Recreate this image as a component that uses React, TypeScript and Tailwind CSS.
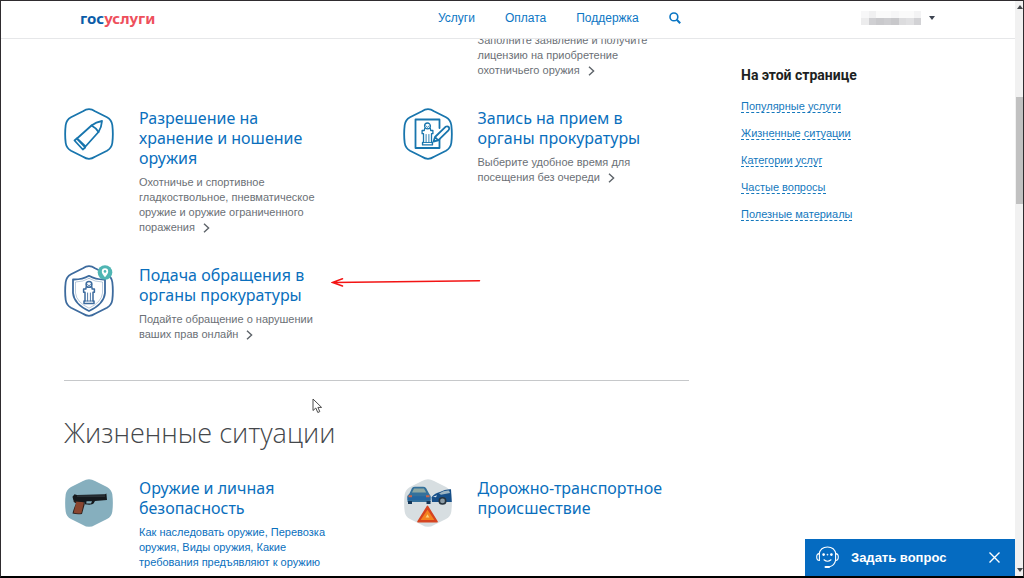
import type { ReactNode } from "react";

type Service = {
  title: string;
  text: string;
  icon: ReactNode;
};

const hexPath =
  "M19 3.2 Q25 -0.8 31 3.2 L43 9.3 Q47.6 12 48.3 17 Q49.4 26 48.3 35 Q47.6 40 43 42.7 L31 48.8 Q25 52.8 19 48.8 L7 42.7 Q2.4 40 1.7 35 Q0.6 26 1.7 17 Q2.4 12 7 9.3 Z";

function BulletIcon() {
  return (
    <svg width="50" height="52" viewBox="0 0 50 52" fill="none" stroke="#1875ad" strokeWidth="1.8" strokeLinejoin="round" strokeLinecap="round">
      <path d={hexPath} />
      <path d="M13 30.5 L27.5 17.5 Q32 14 38 13 Q37.5 19.5 34.5 24 L21.5 38.5 Z" />
      <path d="M27.5 17.5 Q31.5 19.5 34.5 24 M10.5 32.5 L18.8 41.5 M10.5 32.5 L12.8 30.5 L21.2 39.5 L18.8 41.5" />
    </svg>
  );
}

function Pillar() {
  return (
    <>
      <circle cx="0" cy="-8.6" r="2.9" />
      <path d="M-1.6 -8.8 L0 -7 L1.6 -8.8" strokeWidth="0.8" />
      <path d="M-2.8 -6.2 L-3.2 -4 H-5.4 V-0.8 H-4 V8 H-5 V10.4 H5 V8 H4 V-0.8 H5.4 V-4 H3.2 L2.8 -6.2" />
      <path d="M-1.4 0 V8 M1.4 0 V8 M-4 8 H4" strokeWidth="0.9" />
    </>
  );
}

function AppointmentIcon() {
  return (
    <svg width="50" height="52" viewBox="0 0 50 52" fill="none" stroke="#1875ad" strokeWidth="1.8" strokeLinejoin="round" strokeLinecap="round">
      <path d={hexPath} />
      <path d="M36.5 31 V40 H12.5 V11.5 H36.5 V20" />
      <g transform="translate(24.5 26.5)" strokeWidth="1.3">
        <Pillar />
      </g>
      <path d="M30.5 33.5 L32 29 L42.5 18.8 Q44.5 17.6 46 19.4 Q46.8 20.8 45.4 22.3 L35.2 32.4 Z M32 29 L35.2 32.4" fill="#fff" />
    </svg>
  );
}

function AppealIcon() {
  return (
    <svg width="50" height="52" viewBox="0 0 50 52" fill="none" stroke="#3d6b9e" strokeWidth="1.8" strokeLinejoin="round" strokeLinecap="round">
      <path d={hexPath} />
      <path d="M25 10.8 Q18 14.8 9 14.5 V28 Q10 39 25 46 Q40 39 41 28 V14.5 Q32 14.8 25 10.8 Z" />
      <path d="M25 13.4 Q19 17 11.5 17 V28 Q12.5 37.2 25 43.2 Q37.5 37.2 38.5 28 V17 Q31 17 25 13.4 Z" strokeWidth="0.6" strokeOpacity="0.6" />
      <g transform="translate(25 28)" strokeWidth="1.5">
        <Pillar />
      </g>
      <circle cx="41" cy="7.5" r="7.3" fill="#4fb5b3" stroke="none" />
      <path d="M41 12.2 Q37.8 8.5 37.8 6.4 A3.2 3.2 0 0 1 44.2 6.4 Q44.2 8.5 41 12.2 Z" fill="#fff" stroke="none" />
      <circle cx="41" cy="6.4" r="1.3" fill="#4fb5b3" stroke="none" />
    </svg>
  );
}

function GunIcon() {
  return (
    <svg width="50" height="50" viewBox="0 0 50 52" preserveAspectRatio="none">
      <path d={hexPath} fill="#86afbe" />
      <path d="M11 21 L21 22 L20.5 28 L18 37.4 Q13 38 8.5 37 Q9.5 32 12 26.5 L9.5 24.6 Z" fill="#2a211f" />
      <path d="M12.4 24.4 L20 25 L17.4 36.6 Q13 37.2 9.6 36.2 Z" fill="#8a4630" />
      <path d="M8.5 19.5 L10.5 16.8 L13 17.8 L41 17 L42.4 16.2 L43 23 L31 23.8 L29.5 26.6 Q28.5 28.4 20.5 27.4 L21 25.4 L9.5 23.6 Z" fill="#15191d" />
      <path d="M22.5 24.2 H28 L27 26.4 H22.3 Z" fill="#86afbe" />
      <path d="M13 18.8 H41" stroke="#3a4349" strokeWidth="1" />
    </svg>
  );
}

function AccidentIcon() {
  return (
    <svg width="50" height="50" viewBox="0 0 50 52" preserveAspectRatio="none">
      <path d={hexPath} fill="#d7dee1" />
      <path d="M6.5 16 L9 10.5 Q10 9 12 9 H20 Q22 9 23 10.5 L26 16 L27.5 18.5 V25 H4.5 V18.5 Z" fill="#34719c" />
      <path d="M9 15 L11 10.8 H21 L23.2 15 Z" fill="#8fa9a4" />
      <path d="M4.5 19 H27.5 V23 H4.5 Z" fill="#2466a0" />
      <path d="M5.5 18 H9 V20 H5.5 Z M23 18 H26.5 V20 H23 Z" fill="#c9664d" />
      <path d="M5 24 H9 V27 H5 Z M23.5 24 H27.5 V27 H23.5 Z" fill="#15385a" />
      <path d="M28.5 20 Q32 15.5 37 14.5 Q42 11.5 48 11.8 L48.8 25 H29 Z" fill="#174f88" />
      <path d="M36 16 Q41 12.5 46 13 L47 15.5 L38 17.5 Z" fill="#9cb4c2" />
      <path d="M30 19.5 L34 18 L33 20 Z" fill="#dce8ef" />
      <circle cx="39.5" cy="23.8" r="4" fill="#27333d" />
      <circle cx="39.5" cy="23.8" r="2.4" fill="#8c9ba4" />
      <path d="M24.5 29.5 L34 45.5 H15 Z" fill="#d64420" stroke="#d64420" strokeWidth="1.6" strokeLinejoin="round" />
      <path d="M24.5 33 L31.4 43.6 H17.6 Z" fill="#f4831f" />
      <path d="M24.5 37.6 L26.4 41 H22.6 Z" fill="#fbd27c" />
    </svg>
  );
}

function Chevron() {
  return (
    <svg className="ml-2 inline-block" width="7" height="10" viewBox="0 0 7 10" fill="none" stroke="#5d6369" strokeWidth="1.4">
      <path d="M1 0.8 L5.6 5 L1 9.2" />
    </svg>
  );
}

const services: Service[] = [
  {
    title: "Разрешение на хранение и ношение оружия",
    text: "Охотничье и спортивное гладкоствольное, пневматическое оружие и оружие ограниченного поражения",
    icon: <BulletIcon />,
  },
  {
    title: "Запись на прием в органы прокуратуры",
    text: "Выберите удобное время для посещения без очереди",
    icon: <AppointmentIcon />,
  },
  {
    title: "Подача обращения в органы прокуратуры",
    text: "Подайте обращение о нарушении ваших прав онлайн",
    icon: <AppealIcon />,
  },
];

const anchors = [
  "Популярные услуги",
  "Жизненные ситуации",
  "Категории услуг",
  "Частые вопросы",
  "Полезные материалы",
];

const maskColors = [
  "bg-[#f7f7f8]", "bg-[#f0f0f1]", "bg-[#fafafa]", "bg-[#fafafa]", "bg-[#f6f6f7]", "bg-[#fafafa]", "bg-[#fafafa]", "bg-[#f3f3f4]",
  "bg-[#ececed]", "bg-[#cfcfd2]", "bg-[#c9c9cc]", "bg-[#cdcdd0]", "bg-[#c8c8cb]", "bg-[#dcdcde]", "bg-[#e0e0e2]", "bg-[#d2d2d5]",
];

function CardBody({ title, children }: { title: string; children?: ReactNode }) {
  return (
    <div className="w-[196px]">
      <h3 className="font-['Noto_Sans',sans-serif] text-[16px] leading-5 text-[#0a6fbd]">
        <a href="#">{title}</a>
      </h3>
      {children}
    </div>
  );
}

function Header() {
  return (
    <header className="relative z-10 flex h-[38px] shrink-0 items-center border-b border-[#e6e7e9] bg-white pb-1 pl-[79px] pr-20">
      <a href="#" className="w-[358px] font-['Noto_Sans',sans-serif] text-[15px] font-bold leading-5 text-[#0b5ca8]">
        гос<span className="text-[#ee4f5c]">услуги</span>
      </a>
      <nav className="flex items-center gap-[30px] text-[12px] leading-4 text-[#0b76c4]">
        <a href="#">Услуги</a>
        <a href="#">Оплата</a>
        <a href="#">Поддержка</a>
        <button type="button" aria-label="Поиск">
          <svg width="12" height="12" viewBox="0 0 12 12" fill="none" stroke="#0b76c4" strokeWidth="1.6">
            <circle cx="4.9" cy="4.9" r="3.9" />
            <path d="M7.8 7.8 L11.2 11.2" strokeWidth="2" />
          </svg>
        </button>
      </nav>
      <button type="button" aria-label="Профиль" className="ml-auto flex items-center gap-2">
        <span className="grid w-[60px] grid-cols-8">
          {maskColors.map((color, i) => (
            <span key={i} className={`h-[7px] ${color}`} />
          ))}
        </span>
        <svg width="6" height="4" viewBox="0 0 6 4" fill="#3c4350">
          <path d="M0 0 H6 L3 4 Z" />
        </svg>
      </button>
    </header>
  );
}

function Chat() {
  return (
    <div className="absolute bottom-0 right-0 z-20 flex h-[37px] w-[210px] items-center bg-[#056bc1] pl-[11px] pr-[15px] text-white">
      <svg width="23" height="23" viewBox="0 0 23 23" fill="none" stroke="#fff" strokeWidth="1.1" strokeLinecap="round">
        <path d="M3 8 Q4.5 1 11.5 1 Q18.5 1 20 8" />
        <path d="M3.4 7.6 Q0.7 7.6 0.7 11 Q0.7 14.4 3.4 14.4 Z M19.6 7.6 Q22.3 7.6 22.3 11 Q22.3 14.4 19.6 14.4 Z" />
        <path d="M19.6 14.4 Q18.5 19.5 13.5 20.8" />
        <path d="M9.5 21 H13" strokeWidth="2" />
        <path d="M8 13.8 Q11.5 16.6 15 13.8" />
        <circle cx="7.6" cy="8.6" r="0.8" fill="#fff" />
        <circle cx="11.5" cy="8.6" r="0.3" fill="#fff" />
        <circle cx="15.4" cy="8.6" r="0.8" fill="#fff" />
      </svg>
      <button type="button" className="ml-3 text-[13px] font-bold leading-4">
        Задать вопрос
      </button>
      <button type="button" aria-label="Закрыть" className="ml-auto">
        <svg width="11" height="11" viewBox="0 0 11 11" stroke="#fff" strokeWidth="1.4">
          <path d="M0.5 0.5 L10.5 10.5 M10.5 0.5 L0.5 10.5" />
        </svg>
      </button>
    </div>
  );
}

function Scrollbar() {
  return (
    <div className="flex w-[8px] shrink-0 flex-col items-end bg-[#f1f1f1]">
      <svg className="mt-1" width="6" height="4" viewBox="0 0 6 4" fill="#45484c">
        <path d="M0 4 L3 0 L6 4 Z" />
      </svg>
      <div className="mt-[88px] h-[107px] w-[7px] bg-[#c1c1c1]" />
      <svg className="mb-1 mt-auto" width="6" height="4" viewBox="0 0 6 4" fill="#45484c">
        <path d="M0 0 H6 L3 4 Z" />
      </svg>
    </div>
  );
}

export default function App() {
  return (
    <div className="flex h-screen overflow-hidden border border-b-2 border-[#2f2c2f] border-b-black bg-white font-['Liberation_Sans',Arial,sans-serif]">
      <div className="relative flex min-w-0 flex-1 flex-col overflow-hidden">
        <Header />
        <div className="-mt-1.5 flex min-h-0 flex-1 items-start gap-[52px] pl-[63px]">
          <main className="w-[625px] shrink-0">
            <section className="grid grid-cols-2 gap-x-[52px] gap-y-[30px] border-b border-[#c6c8ca] pb-[38px]">
              <div className="col-start-2 pl-[75px]">
                <p className="w-[196px] text-[11px] leading-[15px] text-[#6b7076]">
                  Заполните заявление и получите лицензию на приобретение охотничьего оружия
                  <Chevron />
                </p>
              </div>
              {services.map((service) => (
                <article key={service.title} className="flex items-start gap-[25px]">
                  <div className="w-[50px] shrink-0">{service.icon}</div>
                  <CardBody title={service.title}>
                    <p className="mt-[7px] text-[11px] leading-[15px] text-[#6b7076]">
                      {service.text}
                      <Chevron />
                    </p>
                  </CardBody>
                </article>
              ))}
            </section>

            <h2 className="mt-8 font-['Open_Sans',sans-serif] text-[27px] font-light leading-10 text-[#44474b]">
              Жизненные ситуации
            </h2>

            <section className="mt-[25px] grid grid-cols-2 gap-x-[52px]">
              <article className="flex items-start gap-[25px]">
                <div className="w-[50px] shrink-0">
                  <GunIcon />
                </div>
                <CardBody title="Оружие и личная безопасность">
                  <p className="mt-[7px] text-[11px] leading-[15px] text-[#0a6fbd]">
                    <a href="#">Как наследовать оружие, Перевозка оружия, Виды оружия, Какие требования предъявляют к оружию</a>
                  </p>
                </CardBody>
              </article>
              <article className="flex items-start gap-[25px]">
                <div className="w-[50px] shrink-0">
                  <AccidentIcon />
                </div>
                <CardBody title="Дорожно-транспортное происшествие" />
              </article>
            </section>
          </main>

          <aside className="pt-8">
            <h2 className="font-[Roboto,sans-serif] text-[14px] font-bold leading-5 text-[#1d1f22]">На этой странице</h2>
            <ul className="mt-[15px] flex flex-col items-start gap-[14px] text-[11px] leading-3 text-[#1478bd]">
              {anchors.map((anchor) => (
                <li key={anchor} className="border-b border-dashed border-[#1478bd]">
                  <a href="#">{anchor}</a>
                </li>
              ))}
            </ul>
          </aside>
        </div>

        {/* pointer and annotation over the page */}
        <svg className="pointer-events-none absolute left-[330px] top-[275px]" width="152" height="12" viewBox="0 0 152 12" fill="none" stroke="#f31414" strokeWidth="1.5" strokeLinecap="round">
          <path d="M1.5 6.4 L148.5 4.8 M11.5 2.8 L1.5 6.4 L11.5 10" />
        </svg>
        <svg className="pointer-events-none absolute left-[311px] top-[397px]" width="11" height="16" viewBox="0 0 11 16" fill="#fff" stroke="#4a4a4a" strokeWidth="1">
          <path d="M1 1 V12.5 L3.8 10 L5.8 14.5 L7.8 13.6 L5.9 9.4 H9.6 Z" />
        </svg>
        <Chat />
      </div>
      <Scrollbar />
    </div>
  );
}
